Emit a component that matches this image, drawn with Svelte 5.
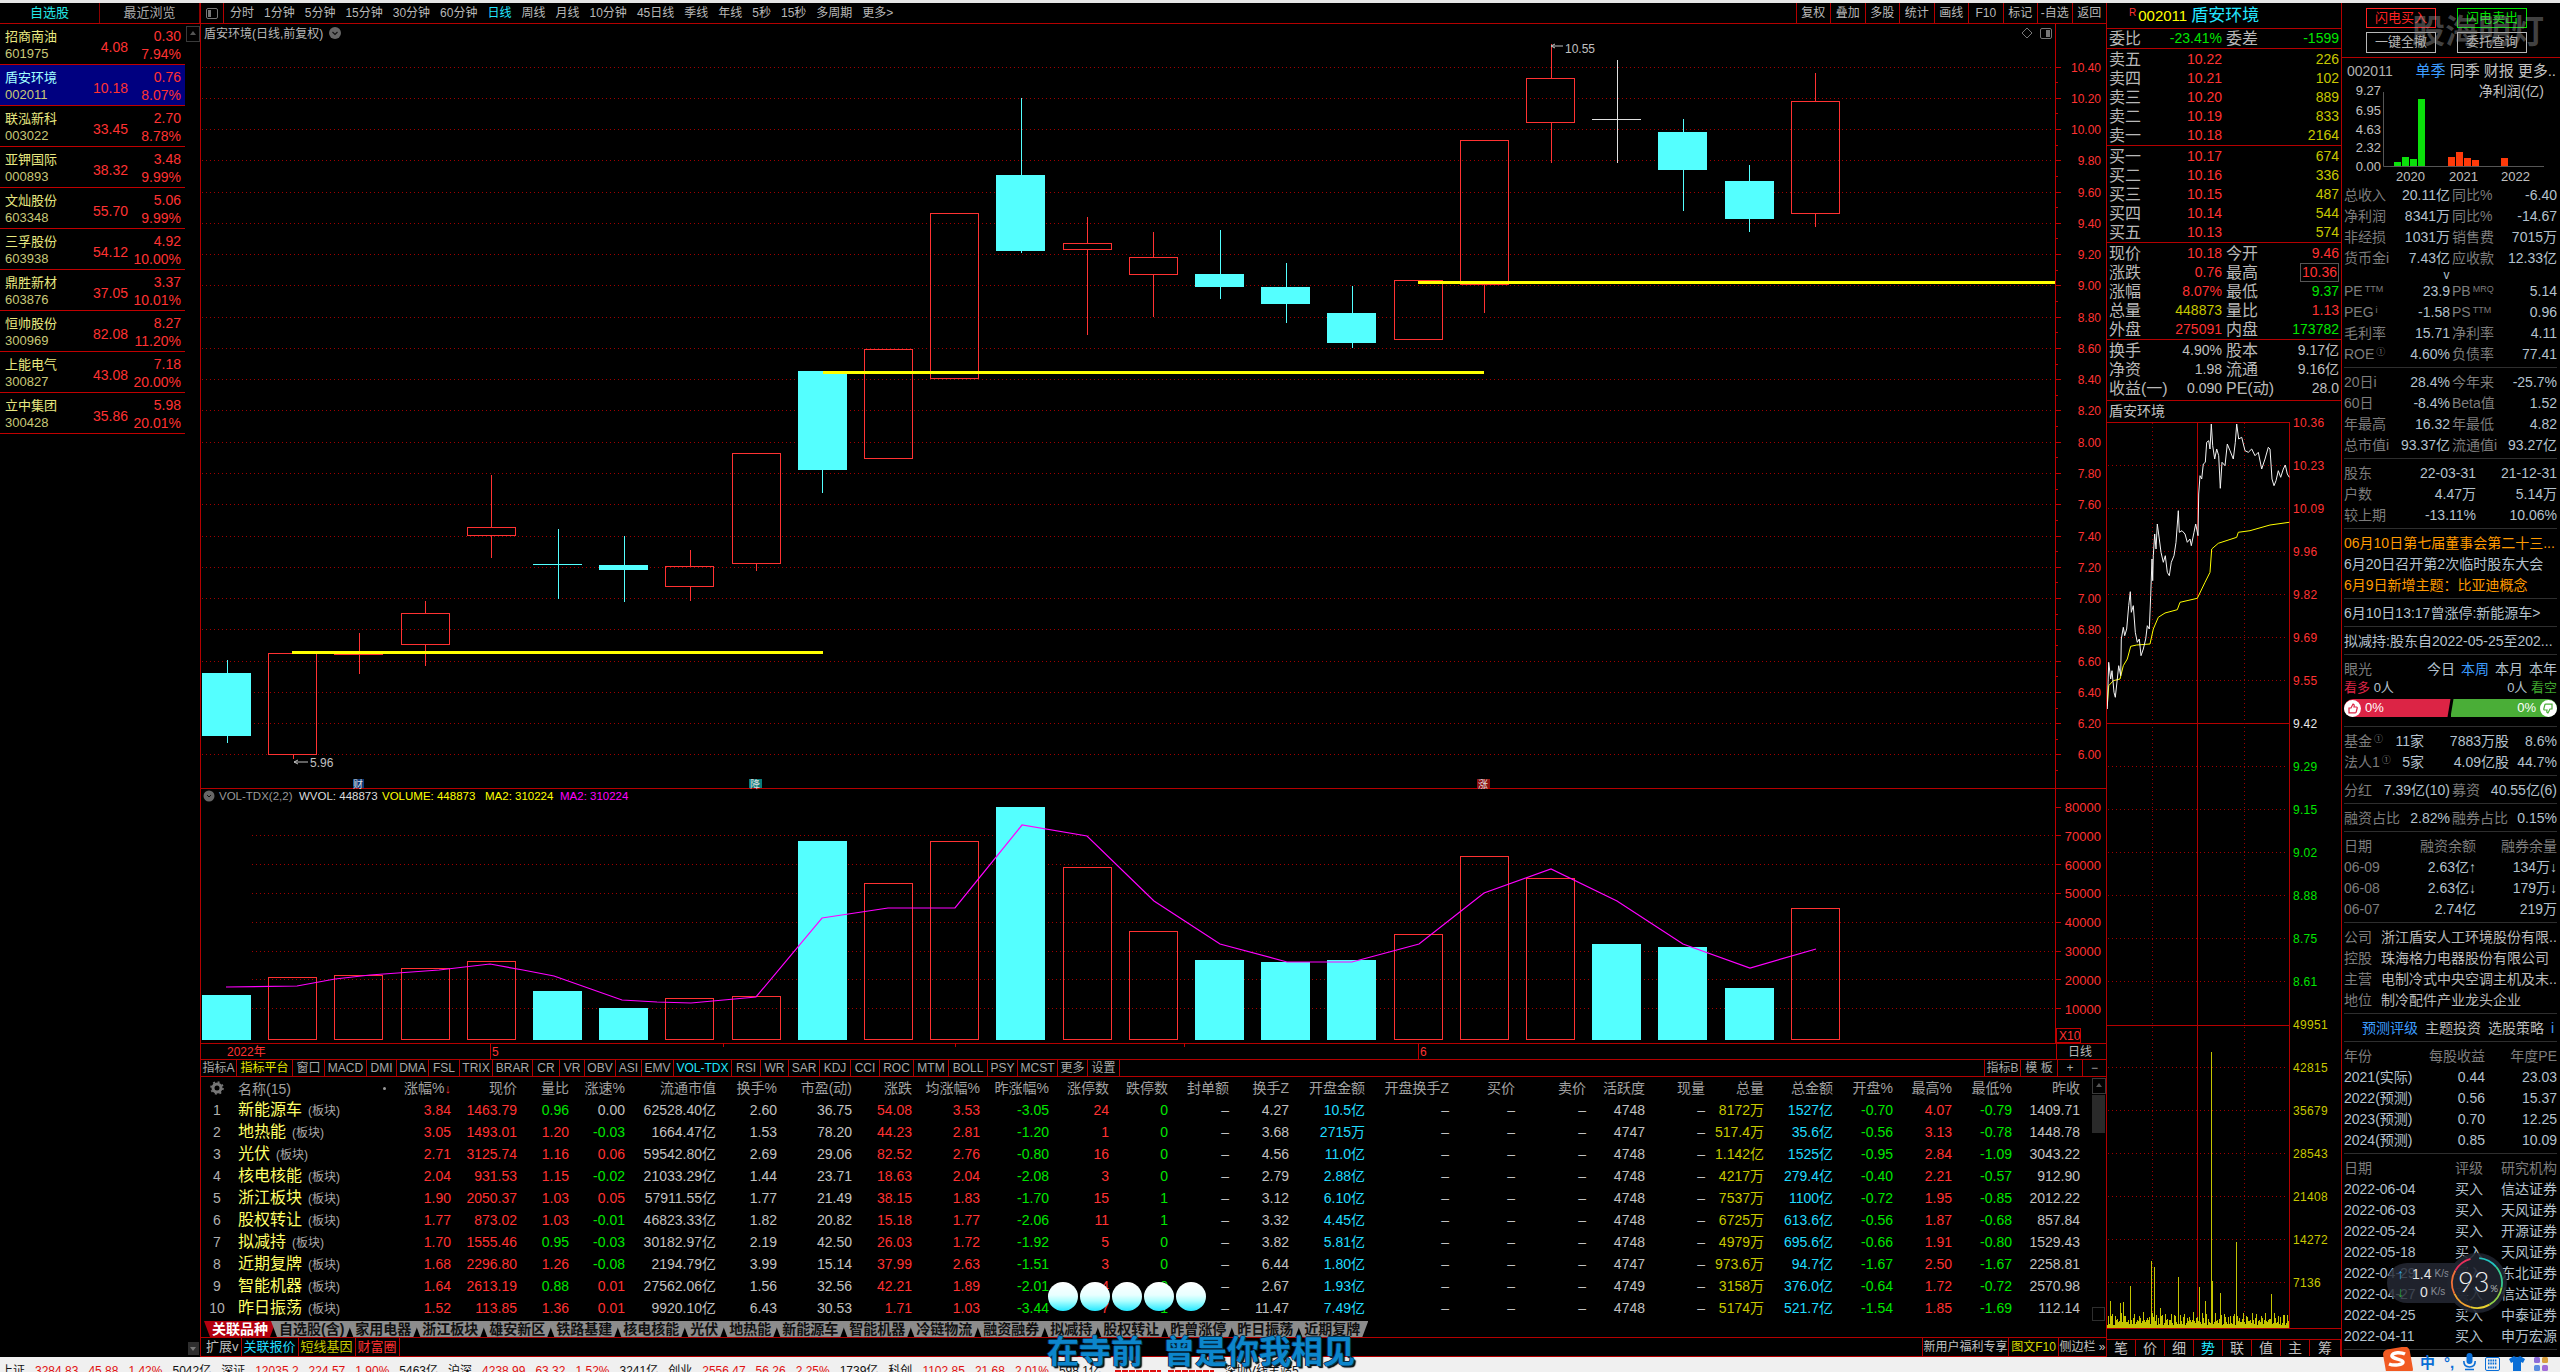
<script>
  // watchlist
  const watch = [
    ['招商南油', '601975', '4.08', '0.30', '7.94%'],
    ['盾安环境', '002011', '10.18', '0.76', '8.07%'],
    ['联泓新科', '003022', '33.45', '2.70', '8.78%'],
    ['亚钾国际', '000893', '38.32', '3.48', '9.99%'],
    ['文灿股份', '603348', '55.70', '5.06', '9.99%'],
    ['三孚股份', '603938', '54.12', '4.92', '10.00%'],
    ['鼎胜新材', '603876', '37.05', '3.37', '10.01%'],
    ['恒帅股份', '300969', '82.08', '8.27', '11.20%'],
    ['上能电气', '300827', '43.08', '7.18', '20.00%'],
    ['立中集团', '300428', '35.86', '5.98', '20.01%']
  ];
  const periods = ['分时', '1分钟', '5分钟', '15分钟', '30分钟', '60分钟', '日线', '周线', '月线', '10分钟', '45日线', '季线', '年线', '5秒', '15秒', '多周期', '更多>'];
  const toolsRight = ['复权', '叠加', '多股', '统计', '画线', 'F10', '标记', '-自选', '返回'];

  // candles in coordinates of the 1568 wide preview: type, body top, body bottom, wick top, wick bottom
  const K = 1.6327;
  const candles = [
    ['c', 412, 451, 404, 455], ['r', 400, 462, 400, 465], ['r', 399.5, 401, 388, 413], ['r', 376, 395, 368, 408],
    ['r', 323, 328, 291, 342], ['c', 345.5, 346, 324, 367], ['c', 346, 349, 328, 369], ['r', 347, 359, 337, 368],
    ['r', 278, 345, 278, 350], ['c', 227, 288, 227, 302], ['r', 214, 281, 214, 281], ['r', 131, 232, 131, 232],
    ['c', 107, 154, 60, 155], ['r', 149, 153, 133, 205], ['r', 158, 168, 142, 194], ['c', 168, 176, 141, 183],
    ['c', 176, 186, 161, 198], ['c', 192, 210, 175, 213], ['r', 172, 208, 172, 208], ['r', 86, 174, 86, 192],
    ['r', 48, 75, 27, 100], ['w', 73, 73.6, 37, 100], ['c', 81, 104, 73, 129], ['c', 111, 134, 101, 142], ['r', 62, 131, 45, 139]
  ];
  const barX = (i) => 202 + 66.2 * i;
  const volTops = [995, 977, 975, 968, 961, 991, 1008, 998, 996, 841, 883, 841, 807, 867, 931, 960, 962, 960, 934, 856, 878, 944, 947, 988, 908];
  const types = candles.map((c) => c[0]);
  const volLine = [[226, 987], [297, 986], [335, 979], [370, 975], [439, 970], [490, 964], [523, 970], [554, 976], [622, 1000], [657, 1002], [691, 1003], [756, 997],
    [822, 918], [888, 908], [955, 908], [1022, 825], [1087, 836], [1154, 901], [1220, 944], [1287, 962], [1352, 962], [1419, 944], [1484, 893], [1551, 869], [1617, 901], [1683, 944], [1750, 968], [1816, 949]]
    .map((p) => p.join(',')).join(' ');
  const priceLabels = Array.from({ length: 23 }, (_, i) => ({ t: (10.4 - i * 0.2).toFixed(2), y: 67 + i * 31.27 }));
  const volLabels = [80000, 70000, 60000, 50000, 40000, 30000, 20000, 10000].map((v, i) => ({ t: v, y: 807 + i * 28.83 }));

  const indTabs = [['指标A', 36], ['指标平台', 56, 'y'], ['窗口', 32], ['MACD', 42], ['DMI', 30], ['DMA', 32], ['FSL', 31], ['TRIX', 33], ['BRAR', 40], ['CR', 27], ['VR', 25], ['OBV', 31], ['ASI', 26], ['EMV', 32], ['VOL-TDX', 58, 'c'], ['RSI', 29], ['WR', 28], ['SAR', 31], ['KDJ', 31], ['CCI', 29], ['ROC', 34], ['MTM', 35], ['BOLL', 39], ['PSY', 30], ['MCST', 40], ['更多', 30], ['设置', 32]];

  // sector table
  const heads = ['涨幅%', '现价', '量比', '涨速%', '流通市值', '换手%', '市盈(动)', '涨跌', '均涨幅%', '昨涨幅%', '涨停数', '跌停数', '封单额', '换手Z', '开盘金额', '开盘换手Z', '买价', '卖价', '活跃度', '现量', '总量', '总金额', '开盘%', '最高%', '最低%', '昨收'];
  const colKind = ['r', 'r', 's1', 's0', 'w', 'w', 'w', 'r', 'r', 'g', 'r', 'g', 'w', 'w', 'c', 'w', 'w', 'w', 'w', 'w', 'y', 'c', 'g', 'r', 'g', 'w'];
  const D = '–';
  const sectors = [
    ['新能源车', '3.84 1463.79 0.96 0.00 62528.40亿 2.60 36.75 54.08 3.53 -3.05 24 0 – 4.27 10.5亿 – – – 4748 – 8172万 1527亿 -0.70 4.07 -0.79 1409.71'],
    ['地热能', '3.05 1493.01 1.20 -0.03 1664.47亿 1.53 78.20 44.23 2.81 -1.20 1 0 – 3.68 2715万 – – – 4747 – 517.4万 35.6亿 -0.56 3.13 -0.78 1448.78'],
    ['光伏', '2.71 3125.74 1.16 0.06 59542.80亿 2.69 29.06 82.52 2.76 -0.80 16 0 – 4.56 11.0亿 – – – 4748 – 1.142亿 1525亿 -0.95 2.84 -1.09 3043.22'],
    ['核电核能', '2.04 931.53 1.15 -0.02 21033.29亿 1.44 23.71 18.63 2.04 -2.08 3 0 – 2.79 2.88亿 – – – 4748 – 4217万 279.4亿 -0.40 2.21 -0.57 912.90'],
    ['浙江板块', '1.90 2050.37 1.03 0.05 57911.55亿 1.77 21.49 38.15 1.83 -1.70 15 1 – 3.12 6.10亿 – – – 4748 – 7537万 1100亿 -0.72 1.95 -0.85 2012.22'],
    ['股权转让', '1.77 873.02 1.03 -0.01 46823.33亿 1.82 20.82 15.18 1.77 -2.06 11 1 – 3.32 4.45亿 – – – 4748 – 6725万 613.6亿 -0.56 1.87 -0.68 857.84'],
    ['拟减持', '1.70 1555.46 0.95 -0.03 30182.97亿 2.19 42.50 26.03 1.72 -1.92 5 0 – 3.82 5.81亿 – – – 4748 – 4979万 695.6亿 -0.66 1.91 -0.80 1529.43'],
    ['近期复牌', '1.68 2296.80 1.26 -0.08 2194.79亿 3.99 15.14 37.99 2.63 -1.51 3 0 – 6.44 1.80亿 – – – 4747 – 973.6万 94.7亿 -1.67 2.50 -1.67 2258.81'],
    ['智能机器', '1.64 2613.19 0.88 0.01 27562.06亿 1.56 32.56 42.21 1.89 -2.01 4 0 – 2.67 1.93亿 – – – 4749 – 3158万 376.0亿 -0.64 1.72 -0.72 2570.98'],
    ['昨日振荡', '1.52 113.85 1.36 0.01 9920.10亿 6.43 30.53 1.71 1.03 -3.44 7 1 – 11.47 7.49亿 – – – 4748 – 5174万 521.7亿 -1.54 1.85 -1.69 112.14']
  ];
  function cellClass(v, kind) {
    if (v === D) return 'w';
    if (kind === 's1') return parseFloat(v) < 1 ? 'g' : 'r';
    if (kind === 's0') return parseFloat(v) < 0 ? 'g' : parseFloat(v) > 0 ? 'r' : 'w';
    return kind;
  }
  const sheetTabs = ['关联品种', '自选股(含)', '家用电器', '浙江板块', '雄安新区', '铁路基建', '核电核能', '光伏', '地热能', '新能源车', '智能机器', '冷链物流', '融资融券', '拟减持', '股权转让', '昨曾涨停', '昨日振荡', '近期复牌'];

  // quote panel
  const sells = [['卖五', '10.22', '226'], ['卖四', '10.21', '102'], ['卖三', '10.20', '889'], ['卖二', '10.19', '833'], ['卖一', '10.18', '2164']];
  const buys = [['买一', '10.17', '674'], ['买二', '10.16', '336'], ['买三', '10.15', '487'], ['买四', '10.14', '544'], ['买五', '10.13', '574']];
  const stats = [
    ['现价', '10.18', 'r', '今开', '9.46', 'r'], ['涨跌', '0.76', 'r', '最高', '10.36', 'r box'], ['涨幅', '8.07%', 'r', '最低', '9.37', 'g'],
    ['总量', '448873', 'y', '量比', '1.13', 'r'], ['外盘', '275091', 'r', '内盘', '173782', 'g']
  ];
  const stats2 = [['换手', '4.90%', '股本', '9.17亿'], ['净资', '1.98', '流通', '9.16亿'], ['收益(一)', '0.090', 'PE(动)', '28.0']];

  // intraday curves, read at 3x zoom with origin (2090, 400)
  const toMini = (pts) => pts.map(([x, y]) => `${(2090 + x / 3).toFixed(1)},${(400 + y / 3).toFixed(1)}`).join(' ');
  const priceLine = toMini([[52, 930], [56, 790], [62, 840], [66, 815], [72, 880], [76, 895], [82, 840], [86, 800], [92, 830], [94, 720], [100, 685], [104, 710], [110, 690], [116, 620], [121, 578], [124, 640], [130, 620], [136, 700], [142, 730], [148, 720], [153, 770], [160, 750], [167, 720], [172, 680], [178, 690], [182, 590], [186, 480], [188, 545], [190, 470], [194, 405], [198, 450], [202, 375], [208, 420], [213, 460], [220, 490], [226, 470], [232, 520], [238, 530], [244, 490], [252, 470], [258, 430], [265, 335], [268, 400], [276, 395], [285, 405], [292, 430], [300, 420], [304, 440], [312, 400], [317, 375], [324, 410], [326, 285], [330, 230], [335, 240], [340, 195], [346, 190], [350, 130], [356, 125], [360, 150], [364, 75], [368, 140], [374, 180], [380, 150], [386, 170], [391, 268], [396, 190], [405, 200], [412, 135], [420, 155], [430, 180], [436, 130], [440, 75], [446, 120], [455, 115], [465, 155], [475, 160], [485, 150], [495, 170], [505, 160], [515, 210], [525, 180], [535, 145], [540, 150], [546, 240], [552, 260], [558, 245], [565, 215], [572, 235], [580, 210], [586, 198], [592, 225], [598, 235]]);
  const avgLine = toMini([[52, 920], [56, 860], [70, 845], [90, 840], [100, 800], [112, 780], [122, 742], [140, 738], [180, 735], [190, 690], [205, 655], [225, 642], [262, 632], [270, 610], [322, 598], [345, 550], [360, 520], [365, 450], [385, 433], [440, 415], [445, 400], [480, 395], [540, 378], [598, 370]]);
  const spikes = { 3: 27, 13: 25, 16: 26, 23: 42, 44: 67, 47: 61, 53: 20, 71: 51, 92: 41, 98: 27, 104: 276, 105: 47, 113: 35, 129: 86, 164: 34 };
  let miniVol = '';
  for (let i = 0; i < 182; i++) {
    const h = spikes[i] || 3 + Math.abs(Math.sin(i * 1.7) + Math.sin(i * 0.31) * 0.8) * 7;
    miniVol += `M${2107.5 + i} 1329V${(1329 - h).toFixed(0)}`;
  }
  const miniPriceLabels = [['10.36', 'r'], ['10.23', 'r'], ['10.09', 'r'], ['9.96', 'r'], ['9.82', 'r'], ['9.69', 'r'], ['9.55', 'r'], ['9.42', 'w'], ['9.29', 'g'], ['9.15', 'g'], ['9.02', 'g'], ['8.88', 'g'], ['8.75', 'g'], ['8.61', 'g'], ['49951', 'y'], ['42815', 'y'], ['35679', 'y'], ['28543', 'y'], ['21408', 'y'], ['14272', 'y'], ['7136', 'y']];
  const miniTabs = [['笔', 29], ['价', 29], ['细', 29], ['势', 29, 'c'], ['联', 29], ['值', 29], ['主', 29], ['筹', 31]];

  // right panel
  const finA = [['总收入', '20.11亿', '同比%', '-6.40'], ['净利润', '8341万', '同比%', '-14.67'], ['非经损', '1031万', '销售费', '7015万'], ['货币金i', '7.43亿', '应收款', '12.33亿']];
  const finB = [['PE', 'TTM', '23.9', 'PB', 'MRQ', '5.14'], ['PEG', 'i', '-1.58', 'PS', 'TTM', '0.96'], ['毛利率', '', '15.71', '净利率', '', '4.11'], ['ROE', '①', '4.60%', '负债率', '', '77.41']];
  const finC = [['20日i', '28.4%', '今年来', '-25.7%'], ['60日', '-8.4%', 'Beta值', '1.52'], ['年最高', '16.32', '年最低', '4.82'], ['总市值i', '93.37亿', '流通值i', '93.27亿']];
  const holders = [['股东', '22-03-31', '21-12-31', 1], ['户数', '4.47万', '5.14万'], ['较上期', '-13.11%', '10.06%']];
  const margin = [['日期', '融资余额', '融券余量', 1], ['06-09', '2.63亿↑', '134万↓'], ['06-08', '2.63亿↓', '179万↓'], ['06-07', '2.74亿', '219万']];
  const company = [['公司', '浙江盾安人工环境股份有限..'], ['控股', '珠海格力电器股份有限公司'], ['主营', '电制冷式中央空调主机及末..'], ['地位', '制冷配件产业龙头企业']];
  const forecast = [['2021(实际)', '0.44', '23.03'], ['2022(预测)', '0.56', '15.37'], ['2023(预测)', '0.70', '12.25'], ['2024(预测)', '0.85', '10.09']];
  const ratings = [['2022-06-04', '信达证券'], ['2022-06-03', '天风证券'], ['2022-05-24', '开源证券'], ['2022-05-18', '天风证券'], ['2022-04-29', '东北证券'], ['2022-04-27', '信达证券'], ['2022-04-25', '中泰证券'], ['2022-04-11', '申万宏源']];

  const status = [['上证', ''], ['3284.83', 'r'], ['45.88', 'r'], ['1.42%', 'r'], ['5042亿', ''], ['深证', ''], ['12035.2', 'r'], ['224.57', 'r'], ['1.90%', 'r'], ['5463亿', ''], ['沪深', ''], ['4238.99', 'r'], ['63.32', 'r'], ['1.52%', 'r'], ['3241亿', ''], ['创业', ''], ['2556.47', 'r'], ['56.26', 'r'], ['2.25%', 'r'], ['1739亿', ''], ['科创', ''], ['1102.85', 'r'], ['21.68', 'r'], ['2.01%', 'r'], ['598.1亿', '']];

  // speed widget ring, angles clockwise from twelve o'clock
  function arc(a0, a1, r = 25, cx = 30, cy = 30) {
    const p = (a) => [cx + r * Math.sin((a * Math.PI) / 180), cy - r * Math.cos((a * Math.PI) / 180)];
    const [x0, y0] = p(a0);
    const [x1, y1] = p(a1);
    return `M${x0.toFixed(2)} ${y0.toFixed(2)}A${r} ${r} 0 0 1 ${x1.toFixed(2)} ${y1.toFixed(2)}`;
  }
  const ring = [[5, 50, '#22c4c0'], [50, 100, '#35c890'], [100, 150, '#8ecf4a'], [150, 195, '#e8d030'], [195, 245, '#f0a030'], [245, 300, '#f07038'], [300, 345, '#e8305c']];
</script>

<div class="app">
  <div class="strip"></div>
  <div class="main">
    <aside class="watch">
      <div class="wtabs">
        <span class="wtab on">自选股</span>
        <span class="wtab">最近浏览</span>
      </div>
      <div class="wbody">
        <div class="wlist">
          {#each watch as w, i}
            <div class="wrow" class:sel={i === 1}>
              <div class="wname">{w[0]}<br /><span class="wcode">{w[1]}</span></div>
              <div class="wprice">{w[2]}</div>
              <div class="wchg">{w[3]}<br />{w[4]}</div>
            </div>
          {/each}
        </div>
        <div class="wscroll">
          <span class="upbtn"></span>
        </div>
      </div>
      <span class="dnbtn"></span>
    </aside>

    <section class="center">
      <div class="toolbar">
        <svg class="tgl" width="12" height="11" viewBox="0 0 12 11"><rect x="0.5" y="0.5" width="11" height="10" rx="1.5" fill="none" stroke="#777" /><rect x="2" y="2" width="3" height="7" fill="#777" /></svg>
        <div class="periods">
          {#each periods as p}
            <span class:on={p === '日线'}>{p}</span>
          {/each}
        </div>
        <div class="tools">
          {#each toolsRight as t}
            <span>{t}</span>
          {/each}
        </div>
      </div>

      <svg class="chart" width="1905" height="1036" viewBox="201 24 1905 1036">
        <!-- grid -->
        {#each priceLabels as l}
          <line x1="202" x2="2054" y1={l.y} y2={l.y} class="dots" />
          <line x1="2055" x2="2061" y1={l.y} y2={l.y} class="axis" />
          <line x1="2055" x2="2058" y1={l.y + 15.6} y2={l.y + 15.6} class="axis" />
          <text x="2101" y={l.y + 4.5} class="axt">{l.t}</text>
        {/each}
        <line x1="2055.5" x2="2055.5" y1="24" y2="1043" class="axis" />
        <line x1="201" x2="2106" y1="788.5" y2="788.5" class="border" />
        <line x1="201" x2="2106" y1="1043.5" y2="1043.5" class="border" />
        <line x1="201" x2="2106" y1="1059.5" y2="1059.5" class="border" />

        <!-- candles -->
        {#each candles as c, i}
          {@const x = barX(i)}
          {@const mid = Math.round(x + 24.5) + 0.5}
          {#if c[3] < c[1]}<line x1={mid} x2={mid} y1={c[3] * K} y2={c[1] * K} class="wk {c[0]}" />{/if}
          {#if c[4] > c[2]}<line x1={mid} x2={mid} y1={c[2] * K} y2={c[4] * K} class="wk {c[0]}" />{/if}
          {#if c[0] === 'r'}
            <rect x={x + 0.5} y={c[1] * K} width="48" height={(c[2] - c[1]) * K} class="hollow" />
          {:else}
            <rect x={x} y={c[1] * K} width="49" height={Math.max((c[2] - c[1]) * K, 1)} class={c[0] === 'c' ? 'solid' : 'doji'} />
          {/if}
        {/each}

        <!-- support lines -->
        <rect x="292" y="651" width="531" height="3" class="ylw" />
        <rect x="823" y="371" width="661" height="3" class="ylw" />
        <rect x="1418" y="281" width="637" height="3" class="ylw" />

        <text x="1565" y="53" class="note">10.55</text>
        <path d="M1551 46h12M1551 46l4-2M1551 46l4 2" class="noteline" />
        <text x="310" y="767" class="note">5.96</text>
        <path d="M294 762h14M294 762l4-2M294 762l4 2" class="noteline" />

        <!-- chart titles and small icons -->
        <text x="204" y="38" class="title">盾安环境(日线,前复权)</text>
        <circle cx="335" cy="33" r="6" fill="#666" />
        <path d="M332.5 32l2.5 2.5 2.5-2.5" stroke="#111" fill="none" stroke-width="1.2" />
        <polygon points="2027,28 2032,33 2027,38 2022,33" fill="none" stroke="#777" />
        <rect x="2040.5" y="28.5" width="11" height="10" rx="1.5" fill="none" stroke="#777" />
        <rect x="2046" y="30" width="4" height="7" fill="#777" />

        <rect x="353" y="779" width="11" height="9" fill="#0a3a78" /><text x="353" y="788" class="mark">财</text>
        <rect x="749" y="779" width="13" height="9" fill="#0a7c7c" /><text x="750" y="788" class="mark">降</text>
        <rect x="1477" y="779" width="13" height="9" fill="#8c1010" /><text x="1478" y="788" class="mark">涨</text>

        <!-- volume -->
        <circle cx="209" cy="796" r="5.5" fill="#666" />
        <path d="M207 795l2 2 2-2" stroke="#111" fill="none" />
        <text x="219" y="800" class="vt gry">VOL-TDX(2,2)</text>
        <text x="299" y="800" class="vt wht">WVOL: 448873</text>
        <text x="382" y="800" class="vt ylt">VOLUME: 448873</text>
        <text x="485" y="800" class="vt ylt">MA2: 310224</text>
        <text x="560" y="800" class="vt mag">MA2: 310224</text>
        {#each volLabels as l, i}
          {#if i > 0}<line x1="252" x2="2054" y1={l.y} y2={l.y} class="dots" />{/if}
          <line x1="2056" x2="2061" y1={l.y} y2={l.y} class="axis" />
          <text x="2101" y={l.y + 5} class="axt vx">{l.t}</text>
        {/each}
        {#each volTops as top, i}
          {#if types[i] === 'r'}
            <rect x={barX(i) + 0.5} y={top + 0.5} width="48" height={1039 - top} class="hollow" />
          {:else}
            <rect x={barX(i)} y={top} width="49" height={1040 - top} class="solid" />
          {/if}
        {/each}
        <polyline points={volLine} class="maline" />
        <rect x="2056.5" y="1028.5" width="24" height="14" fill="none" class="axis" />
        <text x="2059" y="1040" class="axt x10">X10</text>

        <!-- date row -->
        <text x="227" y="1056" class="date">2022年</text>
        <line x1="490.5" x2="490.5" y1="1043" y2="1059" class="axis" />
        <text x="492" y="1056" class="date">5</text>
        <line x1="1418.5" x2="1418.5" y1="1043" y2="1059" class="axis" />
        <text x="1420" y="1056" class="date">6</text>
        <line x1="723.5" x2="723.5" y1="1043" y2="1047" class="axis" />
        <line x1="955.5" x2="955.5" y1="1043" y2="1047" class="axis" />
        <line x1="1184.5" x2="1184.5" y1="1043" y2="1047" class="axis" />
        <line x1="2056.5" x2="2056.5" y1="1043" y2="1059" class="axis" />
        <text x="2068" y="1056" class="title">日线</text>
      </svg>

      <div class="indtabs">
        {#each indTabs as t}
          <span class="ind {t[2] || ''}" style="width:{t[1]}px">{t[0]}</span>
        {/each}
        <div class="indright">
          <span style="width:36px">指标B</span>
          <span style="width:37px">模 板</span>
          <span style="width:25px">+</span>
          <span style="width:24px">−</span>
        </div>
      </div>

      <div class="tablewrap">
        <div class="table">
          <div class="trow thead">
            <div class="tidx">
              <svg width="14" height="14" viewBox="0 0 14 14"><circle cx="7" cy="7" r="4" fill="none" stroke="#777" stroke-width="3" /><circle cx="7" cy="7" r="6" fill="none" stroke="#777" stroke-width="1.6" stroke-dasharray="2 2.7" /></svg>
            </div>
            <div class="tname headname"><span>名称(15)</span><span class="dot"></span></div>
            {#each heads as h, i}
              <div class="tcell">{h}{#if i === 0}<span class="sortarrow">↓</span>{/if}</div>
            {/each}
          </div>
          {#each sectors as s, i}
            <div class="trow">
              <div class="tidx">{i + 1}</div>
              <div class="tname"><span class="sname">{s[0]}</span><span class="tag">(板块)</span></div>
              {#each s[1].split(' ') as v, j}
                <div class="tcell {cellClass(v, colKind[j])}">{v}</div>
              {/each}
            </div>
          {/each}
        </div>
        <div class="tscroll">
          <span class="upbtn"></span>
          <span class="thumb"></span>
          <span class="dnspace"></span>
          <span class="dnbtn2"></span>
        </div>
      </div>

      <div class="sheets">
        {#each sheetTabs as t, i}
          <span class="sheet" class:active={i === 0}>{t}</span>
        {/each}
      </div>

      <div class="bottombar">
        <span class="bb w">扩展v</span>
        <span class="bb c">关联报价</span>
        <span class="bb y">短线基因</span>
        <span class="bb r">财富圈</span>
        <div class="bbright">
          <span class="bb2 w" style="width:86px">新用户福利专享</span>
          <span class="bb2 yl" style="width:50px">图文F10</span>
          <span class="bb2 w" style="width:48px">侧边栏 »</span>
        </div>
      </div>
    </section>

    <section class="quote">
      <div class="qhead"><sup>R</sup><span class="qcode">002011</span><span class="qname">盾安环境</span></div>
      <div class="qgrid sec1">
        <div class="half"><span>委比</span><b class="g">-23.41%</b></div>
        <div class="half"><span>委差</span><b class="g">-1599</b></div>
      </div>
      <div class="qblock">
        {#each sells as s}
          <div class="half wide"><span>{s[0]}</span><b class="r pr">{s[1]}</b><b class="y">{s[2]}</b></div>
        {/each}
      </div>
      <div class="qblock">
        {#each buys as s}
          <div class="half wide"><span>{s[0]}</span><b class="r pr">{s[1]}</b><b class="y">{s[2]}</b></div>
        {/each}
      </div>
      <div class="qblock">
        {#each stats as s}
          <div class="qgrid">
            <div class="half"><span>{s[0]}</span><b class={s[2]}>{s[1]}</b></div>
            <div class="half"><span>{s[3]}</span><b class={s[5]}>{s[4]}</b></div>
          </div>
        {/each}
      </div>
      <div class="qblock last">
        {#each stats2 as s}
          <div class="qgrid">
            <div class="half"><span>{s[0]}</span><b class="w">{s[1]}</b></div>
            <div class="half"><span>{s[2]}</span><b class="w">{s[3]}</b></div>
          </div>
        {/each}
      </div>
      <svg class="mini" width="234" height="938" viewBox="2107 402 234 938">
        <text x="2109" y="417" class="minititle">盾安环境</text>
        {#each miniPriceLabels as l, i}
          {@const y = 423.5 + i * 43.02}
          {#if i !== 7 && i !== 14 && i > 0}<line x1="2108" x2="2288" y1={y} y2={y} class="dots" />{/if}
          <text x="2293" y={y + 4.5} class="mt {l[1]}">{l[0]}</text>
        {/each}
        <line x1="2107" x2="2289" y1="423.5" y2="423.5" class="border" />
        <line x1="2107" x2="2289" y1="724.5" y2="724.5" class="border" />
        <line x1="2107" x2="2289" y1="1026.5" y2="1026.5" class="border" />
        <line x1="2152.5" x2="2152.5" y1="424" y2="1329" class="dots" />
        <line x1="2197.5" x2="2197.5" y1="424" y2="1329" class="border" />
        <line x1="2244.5" x2="2244.5" y1="424" y2="1329" class="dots" />
        <line x1="2289.5" x2="2289.5" y1="423" y2="1329" class="border" />
        <path d={miniVol} stroke="#c4c400" fill="none" />
        <polyline points={avgLine} class="avg" />
        <polyline points={priceLine} class="px" />
        <line x1="2107" x2="2341" y1="1329.5" y2="1329.5" class="border" />
      </svg>
      <div class="minitabs">
        {#each miniTabs as t}
          <span class:c={t[2]} style="width:{t[1]}px">{t[0]}</span>
        {/each}
      </div>
    </section>

    <section class="fund">
      <div class="btns">
        <span class="btn red">闪电买入</span>
        <span class="btn grn">闪电卖出</span>
        <span class="btn wht">一键全撤</span>
        <span class="btn wht">委托查询</span>
        <span class="wm">股海明灯</span>
      </div>
      <div class="finhead">
        <span class="fcode">002011</span>
        <span class="blue">单季</span><span>同季</span><span>财报</span><span>更多..</span>
      </div>
      <svg class="finbars" width="218" height="104" viewBox="2342 81 218 104">
        <text x="2381" y="95" class="fl">9.27</text>
        <text x="2381" y="115" class="fl">6.95</text>
        <text x="2381" y="134" class="fl">4.63</text>
        <text x="2381" y="152" class="fl">2.32</text>
        <text x="2381" y="171" class="fl">0.00</text>
        <text x="2544" y="96" class="fl unit">净利润(亿)</text>
        <path d="M2383.5 92V166.5H2544" fill="none" stroke="#555" />
        <rect x="2394" y="162" width="7" height="4" fill="#0be00b" />
        <rect x="2402" y="157" width="7" height="9" fill="#0be00b" />
        <rect x="2410" y="159" width="7" height="7" fill="#0be00b" />
        <rect x="2418" y="99" width="7" height="67" fill="#0be00b" />
        <rect x="2448" y="157" width="7" height="9" fill="#ff3a0a" />
        <rect x="2456" y="152" width="7" height="14" fill="#ff3a0a" />
        <rect x="2464" y="158" width="7" height="8" fill="#ff3a0a" />
        <rect x="2472" y="160" width="7" height="6" fill="#ff3a0a" />
        <rect x="2501" y="158" width="7" height="8" fill="#ff3a0a" />
        <text x="2396" y="181" class="fy">2020</text>
        <text x="2449" y="181" class="fy">2021</text>
        <text x="2501" y="181" class="fy">2022</text>
      </svg>
      <div class="plain">
        {#each finA as f}
          <div class="r2">
            <div class="half2"><span class="lb">{f[0]}</span><span>{f[1]}</span></div>
            <div class="half2"><span class="lb">{f[2]}</span><span>{f[3]}</span></div>
          </div>
        {/each}
        <div class="vrow">v</div>
        {#each finB as f}
          <div class="r2">
            <div class="half2"><span class="lb">{f[0]}<sup>{f[1]}</sup></span><span>{f[2]}</span></div>
            <div class="half2"><span class="lb">{f[3]}<sup>{f[4]}</sup></span><span>{f[5]}</span></div>
          </div>
        {/each}
      </div>
      <div class="sec">
        {#each finC as f}
          <div class="r2">
            <div class="half2"><span class="lb">{f[0]}</span><span>{f[1]}</span></div>
            <div class="half2"><span class="lb">{f[2]}</span><span>{f[3]}</span></div>
          </div>
        {/each}
      </div>
      <div class="sec">
        {#each holders as h}
          <div class="r3 a"><span class="lb">{h[0]}</span><span>{h[1]}</span><span>{h[2]}</span></div>
        {/each}
      </div>
      <div class="sec">
        <div class="line org">06月10日第七届董事会第二十三...</div>
        <div class="line">6月20日召开第2次临时股东大会</div>
        <div class="line org">6月9日新增主题：比亚迪概念</div>
      </div>
      <div class="sec"><div class="line">6月10日13:17曾涨停:新能源车&gt;</div></div>
      <div class="sec"><div class="line">拟减持:股东自2022-05-25至202...</div></div>
      <div class="sec eye">
        <div class="eyehead">
          <span class="lb">眼光</span>
          <div class="eyetabs"><span>今日</span><span class="blue">本周</span><span>本月</span><span>本年</span></div>
        </div>
        <div class="eyecount"><span><em class="bear">看多</em> 0人</span><span>0人 <em class="bull">看空</em></span></div>
        <div class="vote">
          <div class="vred">
            <svg width="17" height="17" viewBox="0 0 17 17"><circle cx="8.5" cy="8.5" r="8.5" fill="#fff" /><path d="M5 8h2l2-4c1 0 1.5 1 1 3h2.5c.5 0 .8.5.7 1l-1 4c-.1.5-.5.8-1 .8H5z" fill="none" stroke="#dc2445" stroke-width="1.2" /></svg>
            <span>0%</span>
          </div>
          <div class="vgrn">
            <span>0%</span>
            <svg width="17" height="17" viewBox="0 0 17 17"><circle cx="8.5" cy="8.5" r="8.5" fill="#fff" /><path d="M12 9h-2l-2 4c-1 0-1.5-1-1-3H4.500c-.5 0-.8-.5-.7-1l1-4c.1-.5.5-.8 1-.8H12z" fill="none" stroke="#4aae37" stroke-width="1.2" /></svg>
          </div>
        </div>
      </div>
      <div class="sec">
        <div class="r4f"><span class="lb">基金<sup>①</sup></span><span class="c1">11家</span><span class="c2">7883万股</span><span class="c3">8.6%</span></div>
        <div class="r4f"><span class="lb">法人1<sup>①</sup></span><span class="c1">5家</span><span class="c2">4.09亿股</span><span class="c3">44.7%</span></div>
      </div>
      <div class="sec">
        <div class="r2"><div class="half2"><span class="lb">分红</span><span>7.39亿(10)</span></div><div class="half2"><span class="lb">募资</span><span>40.55亿(6)</span></div></div>
      </div>
      <div class="sec">
        <div class="r2 m"><div class="half2"><span class="lb">融资占比</span><span>2.82%</span></div><div class="half2"><span class="lb">融券占比</span><span>0.15%</span></div></div>
      </div>
      <div class="sec">
        {#each margin as h}
          <div class="r3 a"><span class="lb">{h[0]}</span><span class:lb={h[3]}>{h[1]}</span><span class:lb={h[3]}>{h[2]}</span></div>
        {/each}
      </div>
      <div class="sec">
        {#each company as c}
          <div class="cline"><span class="lb">{c[0]}</span><span>{c[1]}</span></div>
        {/each}
      </div>
      <div class="sec">
        <div class="ftabs"><span class="blue">预测评级</span><span>主题投资</span><span>选股策略</span><span class="blue">i</span></div>
      </div>
      <div class="sec">
        <div class="r3 b"><span class="lb">年份</span><span class="lb">每股收益</span><span class="lb">年度PE</span></div>
        {#each forecast as f}
          <div class="r3 b"><span>{f[0]}</span><span>{f[1]}</span><span>{f[2]}</span></div>
        {/each}
      </div>
      <div class="sec lastsec">
        <div class="r3 c3col"><span class="lb">日期</span><span class="lb">评级</span><span class="lb">研究机构</span></div>
        {#each ratings as f}
          <div class="r3 c3col"><span>{f[0]}</span><span>买入</span><span>{f[1]}</span></div>
        {/each}
      </div>
    </section>
  </div>

  <div class="status">
    {#each status as s}
      <span class={s[1]}>{s[0]}</span>
    {/each}
    <i class="redbars"><b></b><b></b></i>
    <span class="server">深圳V线主站5</span>
  </div>

  <!-- overlays -->
  <div class="bubbles">
    {#each [0, 1, 2, 3, 4] as b}<span class="bubble"></span>{/each}
  </div>
  <div class="subtitle"><span>在寺前</span><span>曾是你我相见</span></div>

  <div class="speed">
    <div class="pill">
      <div class="sp"><em class="ua">↑</em><span>1.4</span><small>K/s</small></div>
      <div class="sp"><em class="da">↓</em><span>0</span><small>K/s</small></div>
    </div>
    <div class="gauge">
      <svg width="60" height="60" viewBox="0 0 60 60">
        {#each ring as a}
          <path d={arc(a[0], a[1])} stroke={a[2]} stroke-width="1.8" fill="none" />
        {/each}
      </svg>
      <span class="pct">93<small>%</small></span>
    </div>
  </div>

  <div class="tray">
    <svg width="32" height="24" viewBox="0 0 32 24">
      <rect x="2" y="1" width="27" height="28" rx="5" fill="#f15a22" transform="rotate(-10 15 12)" />
      <path d="M23 7c-4-2-12-2-13 1.5S21 12 21 15s-9 4-14 2" fill="none" stroke="#fff" stroke-width="3.5" />
    </svg>
    <span class="zh">中</span>
    <span class="punct">°,</span>
    <svg width="13" height="18" viewBox="0 0 13 18"><rect x="3.5" y="0" width="6" height="11" rx="3" fill="#0a6ed6" /><path d="M0.8 8c0 4 2.5 6 5.700 6s5.700-2 5.700-6M2 16.5h9" fill="none" stroke="#0a6ed6" stroke-width="1.6" /></svg>
    <svg width="15" height="14" viewBox="0 0 15 14"><rect x="0.5" y="0.5" width="14" height="13" rx="1.5" fill="none" stroke="#0a6ed6" /><path d="M3 3.5h9M3 6.500h9M3 10.500h9" stroke="#0a6ed6" stroke-width="1.8" stroke-dasharray="1.5 0.8" /></svg>
    <svg width="16" height="15" viewBox="0 0 16 15"><path d="M5 0L0 3l2 4 2-1v9h8V6l2 1 2-4-5-3c-1 1.5-5 1.5-6 0z" fill="#0a6ed6" /></svg>
    <svg width="14" height="14" viewBox="0 0 14 14"><rect width="6" height="6" rx="1.5" fill="#8c6cd8" /><rect x="8" width="6" height="6" rx="1.5" fill="#d8a040" /><rect y="8" width="6" height="6" rx="1.5" fill="#5a8ce0" /><rect x="8" y="8" width="6" height="6" rx="1.5" fill="#a06cd8" /></svg>
  </div>
</div>

<style>
  :global(body) {
    margin: 0;
    background: #000;
  }
  .app {
    position: relative;
    width: 2560px;
    height: 1372px;
    overflow: hidden;
    background: #000;
    color: #c0c0c0;
    font-family: 'Liberation Sans', 'Noto Sans CJK SC', sans-serif;
    font-size: 14px;
    display: flex;
    flex-direction: column;
  }
  .strip {
    height: 3px;
    background: #e6e6e6;
  }
  .main {
    display: flex;
    height: 1354px;
  }
  .r { color: #ff3232; }
  .g { color: #00e600; }
  .y { color: #c8c800; }
  .c { color: #20dcff; }
  .w { color: #c0c0c0; }
  b { font-weight: 400; }

  /* watchlist */
  .watch {
    width: 200px;
    flex: none;
    display: flex;
    flex-direction: column;
  }
  .wtabs {
    display: flex;
    height: 20px;
    border-bottom: 1px solid #b40000;
    font-size: 13px;
    line-height: 20px;
    text-align: center;
  }
  .wtab {
    width: 99px;
    color: #a8a8a8;
    border-right: 1px solid #8c0000;
  }
  .wtab.on {
    color: #22e6e6;
  }
  .wbody {
    display: flex;
    flex: 1;
  }
  .wlist {
    width: 186px;
  }
  .wrow {
    display: grid;
    grid-template-columns: 78px 50px 1fr;
    height: 40px;
    border-bottom: 1px solid #c00000;
    padding-right: 4px;
    color: #ff3232;
    text-align: right;
  }
  .wrow.sel {
    background: #000080;
  }
  .wname {
    text-align: left;
    padding: 4px 0 0 5px;
    line-height: 17px;
    font-size: 13px;
    color: #e8e880;
  }
  .sel .wname {
    color: #a0ffff;
  }
  .wcode {
    color: #c8c878;
    font-size: 13px;
  }
  .wprice {
    padding-top: 15px;
    line-height: 17px;
  }
  .wchg {
    padding-top: 3px;
    line-height: 18px;
  }
  .wscroll {
    flex: 1;
    padding: 2px 0 0 1px;
  }
  .upbtn {
    display: block;
    width: 12px;
    height: 14px;
    border: 1px solid #3a3a3a;
    position: relative;
  }
  .upbtn::after {
    content: '';
    position: absolute;
    left: 3px;
    top: 4px;
    border: 3px solid transparent;
    border-bottom: 4px solid #555;
    border-top: 0;
  }
  .dnbtn {
    align-self: flex-end;
    width: 11px;
    height: 13px;
    margin: 0 1px 2px 0;
    background: #2e2e2e;
    position: relative;
  }
  .dnbtn::after {
    content: '';
    position: absolute;
    left: 2px;
    top: 5px;
    border: 3px solid transparent;
    border-top: 4px solid #777;
    border-bottom: 0;
  }

  /* center */
  .center {
    width: 1906px;
    flex: none;
    box-sizing: border-box;
    border-left: 1px solid #b40000;
    display: flex;
    flex-direction: column;
  }
  .toolbar {
    height: 20px;
    border-bottom: 1px solid #b40000;
    display: flex;
    align-items: center;
    font-size: 12px;
    color: #b8b8b8;
  }
  .tgl {
    margin-left: 5px;
    flex: none;
  }
  .periods {
    display: flex;
    gap: 10px;
    margin-left: 5px;
    padding-left: 6px;
    border-left: 1px solid #b40000;
    line-height: 20px;
  }
  .periods .on {
    color: #22e6ff;
  }
  .tools {
    margin-left: auto;
    display: flex;
    line-height: 20px;
  }
  .tools span {
    width: 34.5px;
    text-align: center;
    border-left: 1px solid #b40000;
    box-sizing: border-box;
  }
  .chart {
    display: block;
    flex: none;
  }
  .dots {
    stroke: #a00000;
    stroke-dasharray: 1 3;
    shape-rendering: crispEdges;
  }
  .axis {
    stroke: #c00000;
    shape-rendering: crispEdges;
  }
  .border {
    stroke: #b40000;
    shape-rendering: crispEdges;
  }
  .axt {
    fill: #ff3232;
    font-size: 12px;
    text-anchor: end;
  }
  .axt.vx {
    font-size: 13px;
  }
  .axt.x10 {
    text-anchor: start;
  }
  .hollow {
    fill: none;
    stroke: #ff3232;
    shape-rendering: crispEdges;
  }
  .solid {
    fill: #54ffff;
    shape-rendering: crispEdges;
  }
  .doji {
    fill: #e0e0e0;
    shape-rendering: crispEdges;
  }
  .wk {
    shape-rendering: crispEdges;
  }
  .wk.r { stroke: #ff3232; }
  .wk.c { stroke: #54ffff; }
  .wk.w { stroke: #e0e0e0; }
  .ylw {
    fill: #ffff00;
  }
  .note {
    fill: #c0c0c0;
    font-size: 12px;
  }
  .noteline {
    stroke: #c0c0c0;
    fill: none;
  }
  .title {
    fill: #b8b8b8;
    font-size: 12px;
  }
  .mark {
    fill: #ddd;
    font-size: 10px;
  }
  .vt {
    font-size: 11.5px;
  }
  .vt.gry { fill: #999; }
  .vt.wht { fill: #ddd; }
  .vt.ylt { fill: #ffff00; }
  .vt.mag { fill: #ff00ff; }
  .maline {
    fill: none;
    stroke: #ff00ff;
    stroke-width: 1.2;
  }
  .date {
    fill: #ff3232;
    font-size: 12px;
  }

  .indtabs {
    height: 16px;
    border-bottom: 1px solid #b40000;
    display: flex;
    font-size: 12px;
    line-height: 16px;
    color: #a8a8a8;
    white-space: nowrap;
    text-align: center;
  }
  .ind {
    box-sizing: border-box;
    border-right: 1px solid #b40000;
    overflow: hidden;
  }
  .ind.y {
    color: #e6e600;
  }
  .ind.c {
    color: #22e6ff;
  }
  .indright {
    margin-left: auto;
    display: flex;
  }
  .indright span {
    box-sizing: border-box;
    border-left: 1px solid #b40000;
  }

  .tablewrap {
    height: 245px;
    display: flex;
  }
  .table {
    width: 1891px;
  }
  .trow {
    display: grid;
    grid-template-columns: 32px 162px 56px 66px 52px 56px 91px 61px 75px 60px 68px 69px 60px 59px 61px 60px 76px 84px 66px 71px 59px 60px 59px 69px 60px 59px 60px 68px;
    height: 22px;
    line-height: 22px;
    white-space: nowrap;
  }
  .thead {
    color: #a0a0a0;
  }
  .tidx {
    text-align: center;
    color: #b0b0b0;
  }
  .tidx svg {
    vertical-align: -2px;
  }
  .tname {
    padding-left: 5px;
    display: flex;
    align-items: baseline;
  }
  .headname {
    justify-content: space-between;
    padding-right: 9px;
    align-items: center;
  }
  .dot {
    width: 3px;
    height: 3px;
    border-radius: 50%;
    background: #999;
  }
  .sname {
    font-size: 16px;
    color: #ffff66;
  }
  .tag {
    margin-left: 6px;
    font-size: 12px;
    color: #a8a8a8;
  }
  .tcell {
    text-align: right;
  }
  .sortarrow {
    color: #ff3232;
    font-size: 13px;
  }
  .tscroll {
    width: 13px;
    flex: none;
    display: flex;
    flex-direction: column;
    padding-top: 1px;
  }
  .thumb {
    height: 38px;
    background: #2a2a2a;
    margin-top: 1px;
  }
  .dnspace {
    flex: 1;
  }
  .dnbtn2 {
    height: 14px;
    border: 1px solid #2e2e2e;
    box-sizing: border-box;
  }

  .sheets {
    height: 16px;
    border-bottom: 1px solid #b40000;
    display: flex;
    padding-left: 3px;
    font-size: 14px;
    font-weight: 700;
    line-height: 16px;
    white-space: nowrap;
  }
  .sheet {
    background: #8c8c8c;
    color: #101010;
    padding: 0 8px;
    margin-right: -5px;
    clip-path: polygon(0 0, 100% 0, calc(100% - 6px) 100%, 6px 100%);
  }
  .sheet.active {
    background: #b40010;
    color: #fff;
    position: relative;
  }

  .bottombar {
    height: 18px;
    display: flex;
    padding-left: 3px;
    font-size: 13px;
    line-height: 18px;
    border-bottom: 1px solid #b40000;
  }
  .bb {
    padding: 0 2px;
    border-right: 1px solid #b40000;
  }
  .bbright {
    margin-left: auto;
    display: flex;
    white-space: nowrap;
  }
  .bb2 {
    font-size: 12px;
    box-sizing: border-box;
    text-align: center;
    border-left: 1px solid #b40000;
    overflow: hidden;
  }
  .bb2.yl {
    color: #d8d800;
  }

  /* quote */
  .quote {
    width: 235px;
    flex: none;
    box-sizing: border-box;
    border-left: 1px solid #b40000;
    display: flex;
    flex-direction: column;
    font-size: 14px;
  }
  .qhead {
    height: 25px;
    border-bottom: 1px solid #b40000;
    padding-left: 22px;
    display: flex;
    align-items: center;
    line-height: 25px;
  }
  .qhead sup {
    color: #ff3232;
    font-size: 10px;
    margin-right: 2px;
    line-height: 10px;
    align-self: flex-start;
    margin-top: 5px;
  }
  .qcode {
    color: #ffff00;
    font-size: 15px;
    margin-right: 4px;
  }
  .qname {
    color: #22e6ff;
    font-size: 17px;
  }
  .qgrid {
    display: grid;
    grid-template-columns: 113px 113px;
    column-gap: 4px;
    padding-left: 2px;
  }
  .sec1 {
    height: 19px;
    border-bottom: 1px solid #b40000;
  }
  .half {
    display: flex;
    justify-content: space-between;
    height: 19px;
    line-height: 19px;
    color: #b8b8b8;
  }
  .half span {
    font-size: 16px;
    white-space: nowrap;
  }
  .half.wide {
    padding-left: 2px;
    display: grid;
    grid-template-columns: 70px 43px 1fr;
    text-align: right;
    width: 230px;
  }
  .half.wide span {
    text-align: left;
  }
  .qblock {
    padding-top: 1px;
    border-bottom: 1px solid #b40000;
  }
  .qblock.last {
    padding-bottom: 2px;
  }
  .box {
    border: 1px solid #555;
    height: 17px;
    line-height: 17px;
    padding: 0 1px;
  }
  .minititle {
    fill: #c0c0c0;
    font-size: 14px;
  }
  .mini {
    display: block;
    flex: none;
  }
  .mt {
    font-size: 12px;
    letter-spacing: 0.3px;
  }
  .mt.r { fill: #ff3232; }
  .mt.g { fill: #00e600; }
  .mt.y { fill: #c8c800; }
  .mt.w { fill: #e8e8e8; }
  .avg {
    fill: none;
    stroke: #ffff00;
  }
  .px {
    fill: none;
    stroke: #f4f4f4;
  }
  .minitabs {
    height: 16px;
    border-top: 1px solid #b40000;
    display: flex;
    line-height: 16px;
    text-align: center;
    font-size: 14px;
    color: #c0c0c0;
  }
  .minitabs span {
    box-sizing: border-box;
    border-right: 1px solid #b40000;
  }
  .minitabs .c {
    color: #22e6ff;
  }

  /* fundamentals */
  .fund {
    width: 219px;
    flex: none;
    box-sizing: border-box;
    border-left: 1px solid #b40000;
    color: #b4c2ce;
    font-size: 14px;
    white-space: nowrap;
    overflow: hidden;
  }
  .btns {
    position: relative;
    height: 55px;
    box-sizing: border-box;
    border-bottom: 1px solid #b40000;
    padding: 5px 0 0 24px;
    display: grid;
    grid-template-columns: 70px 70px;
    grid-template-rows: 20px 21px;
    gap: 4px 21px;
    text-align: center;
    font-size: 13px;
  }
  .btn {
    border: 1px solid;
    line-height: 18px;
  }
  .btn.red { color: #ff2222; }
  .btn.grn { color: #00e600; }
  .btn.wht { color: #b8b8b8; }
  .wm {
    position: absolute;
    left: 70px;
    top: 10px;
    font-size: 33px;
    font-weight: 700;
    line-height: 38px;
    color: rgba(160, 160, 160, 0.42);
  }
  .finhead {
    height: 20px;
    margin-top: 3px;
    padding-left: 5px;
    display: flex;
    font-size: 15px;
    line-height: 20px;
    color: #c0c0c0;
  }
  .finhead span {
    margin-right: 4px;
  }
  .fcode {
    width: 68px;
    color: #b0b0b0;
    font-size: 14px;
  }
  .blue {
    color: #3c9cff;
  }
  .finbars {
    display: block;
  }
  .fl {
    fill: #c0c0c0;
    font-size: 13px;
    text-anchor: end;
  }
  .fl.unit {
    font-size: 14px;
  }
  .fy {
    fill: #c0c0c0;
    font-size: 13px;
  }
  .plain {
    padding: 0 3px 2px 2px;
  }
  .lb {
    color: #7c7c7c;
  }
  .lb sup {
    font-size: 9px;
    margin-left: 2px;
    vertical-align: 4px;
    line-height: 0;
  }
  .r2 {
    display: grid;
    grid-template-columns: 106px 105px;
    column-gap: 2px;
    height: 21px;
    line-height: 21px;
  }
  .half2 {
    display: flex;
    justify-content: space-between;
  }
  .vrow {
    height: 12px;
    line-height: 12px;
    text-align: center;
    font-size: 12px;
    padding-right: 8px;
  }
  .sec {
    margin: 0 3px 0 2px;
    border-top: 1px solid #2e2e2e;
    padding: 4px 0 2px;
  }
  .line {
    height: 21px;
    line-height: 21px;
    overflow: hidden;
  }
  .org {
    color: #ff9a00;
  }
  .r3 {
    display: grid;
    height: 21px;
    line-height: 21px;
    text-align: right;
  }
  .r3 span:first-child {
    text-align: left;
  }
  .r3.a {
    grid-template-columns: 50px 82px 81px;
  }
  .r3.b {
    grid-template-columns: 75px 66px 72px;
  }
  .r3.c3col {
    grid-template-columns: 111px 46px 1fr;
    text-align: left;
  }
  .eye {
    padding-bottom: 9px;
  }
  .eyehead {
    display: flex;
    justify-content: space-between;
    height: 20px;
    line-height: 20px;
  }
  .eyetabs {
    display: flex;
    gap: 6px;
  }
  .eyecount {
    display: flex;
    justify-content: space-between;
    height: 18px;
    line-height: 18px;
    font-size: 13px;
  }
  .eyecount em {
    font-style: normal;
  }
  .bear { color: #dc2445; }
  .bull { color: #3fa52e; }
  .vote {
    display: flex;
    height: 18px;
    margin-top: 2px;
    color: #fff;
    font-size: 13px;
    line-height: 18px;
  }
  .vote svg {
    flex: none;
    margin-top: 0.5px;
  }
  .vred,
  .vgrn {
    width: 107px;
    display: flex;
    gap: 4px;
    align-items: center;
  }
  .vred {
    background: #dc2445;
    border-radius: 9px 0 0 9px;
    clip-path: polygon(0 0, 100% 0, calc(100% - 3px) 100%, 0 100%);
  }
  .vgrn {
    background: #4aae37;
    border-radius: 0 9px 9px 0;
    justify-content: flex-end;
    clip-path: polygon(3px 0, 100% 0, 100% 100%, 0 100%);
  }
  .r4f {
    display: grid;
    grid-template-columns: 48px 32px 85px 1fr;
    height: 21px;
    line-height: 21px;
    text-align: right;
  }
  .r4f .lb {
    text-align: left;
  }
  .cline {
    display: flex;
    gap: 9px;
    height: 21px;
    line-height: 21px;
    color: #b8b8b8;
  }
  .ftabs {
    display: flex;
    gap: 7px;
    padding-left: 18px;
    height: 21px;
    line-height: 21px;
    color: #b8b8b8;
  }
  .lastsec {
    border-bottom: 1px solid #2e2e2e;
  }

  /* status bar */
  .status {
    height: 15px;
    background: #f0f0f0;
    display: flex;
    gap: 10px;
    padding: 7px 0 0 1px;
    box-sizing: border-box;
    color: #111;
    font-size: 12px;
    line-height: 14px;
    white-space: nowrap;
    overflow: hidden;
  }
  .status .r {
    color: #e01010;
  }
  .redbars {
    display: flex;
    gap: 7px;
    margin: 6px 0 0 4px;
  }
  .redbars b {
    display: block;
    width: 46px;
    height: 4px;
    background: repeating-linear-gradient(90deg, #e01010 0 6px, transparent 6px 7px);
  }

  /* overlays */
  .bubbles {
    position: absolute;
    left: 1048px;
    top: 1282px;
    display: flex;
    gap: 2px;
  }
  .bubble {
    width: 30px;
    height: 29px;
    border-radius: 50%;
    background: linear-gradient(#ffffff 0%, #e8ffff 45%, #b0ffff 65%, #22e8ff 100%);
  }
  .subtitle {
    position: absolute;
    left: 1047px;
    top: 1333px;
    display: flex;
    gap: 20px;
    font-size: 32px;
    font-weight: 700;
    line-height: 38px;
    color: #0c86cc;
    text-shadow: 1px 1px 0 #04304c, -1px 0 0 #04304c, 0 -1px 0 #04304c, 2px 2px 1px #000;
    white-space: nowrap;
  }
  .speed {
    position: absolute;
    left: 2387px;
    top: 1254px;
    height: 58px;
    display: flex;
    align-items: center;
  }
  .pill {
    width: 80px;
    height: 40px;
    margin-right: -20px;
    background: rgba(38, 42, 54, 0.82);
    border-radius: 20px 0 0 20px;
    color: #e4e4e4;
    font-size: 14px;
    box-sizing: border-box;
    padding: 2px 0 0 10px;
  }
  .sp {
    display: flex;
    height: 18px;
    line-height: 18px;
    gap: 3px;
  }
  .sp small {
    color: #8a8f98;
    font-size: 10px;
  }
  .sp em {
    font-style: normal;
    font-weight: 700;
    width: 12px;
  }
  .ua { color: #38a4e8; }
  .da { color: #2ea83c; }
  .sp:nth-child(2) span {
    margin-left: 8px;
  }
  .gauge {
    position: relative;
    width: 60px;
    height: 60px;
    border-radius: 50%;
    background: rgba(32, 36, 48, 0.88);
  }
  .gauge svg {
    display: block;
  }
  .pct {
    position: absolute;
    left: 11px;
    top: 13px;
    font-family: Lato, 'Liberation Sans', sans-serif;
    font-weight: 300;
    font-size: 27px;
    line-height: 32px;
    color: #f0f0f0;
  }
  .pct small {
    font-size: 10px;
    margin-left: 1px;
  }
  .tray {
    position: absolute;
    left: 2382px;
    top: 1348px;
    width: 178px;
    height: 24px;
    display: flex;
    align-items: flex-end;
    gap: 9px;
  }
  .tray svg {
    flex: none;
    margin-bottom: 1px;
  }
  .zh {
    color: #0a6ed6;
    font-size: 15px;
    font-weight: 700;
    line-height: 18px;
    margin-left: -3px;
  }
  .punct {
    color: #0a6ed6;
    font-size: 15px;
    font-weight: 700;
    line-height: 18px;
  }
</style>
